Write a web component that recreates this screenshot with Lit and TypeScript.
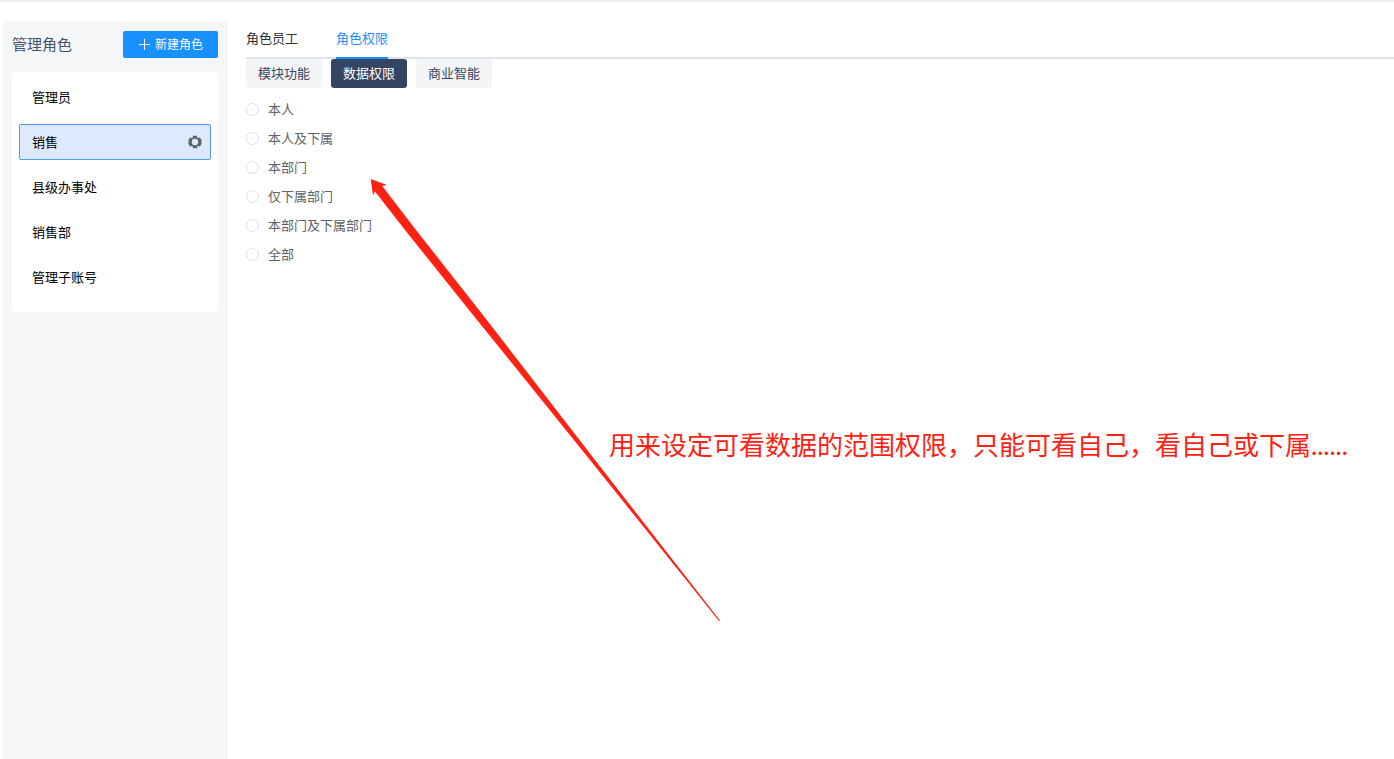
import { LitElement, html, css, svg } from "lit";
import { customElement, state } from "lit/decorators.js";
import { classMap } from "lit/directives/class-map.js";

const gearIcon = svg`<path fill="currentColor" fill-rule="evenodd" d="M4.800 .8h4.400v1.700l1.100.7 1.500-.9L14 6l-1.500 1L14 8l-2.200 3.700-1.500-.9-1.100.7v1.700H4.800v-1.700l-1.100-.7-1.500.9L0 8l1.500-1L0 6l2.200-3.700 1.500.9 1.100-.7zM7 3.800a3.200 3.200 0 1 0 0 6.400 3.200 3.200 0 0 0 0-6.400z"/>`;

@customElement("role-sidebar")
export class RoleSidebar extends LitElement {
  @state() private selected = "销售";
  private roles = ["管理员", "销售", "县级办事处", "销售部", "管理子账号"];

  static styles = css`
    :host {
      display: block;
      box-sizing: border-box;
      padding: 10px 10px 10px 9px;
      background: #f4f6f8;
    }
    .head {
      display: flex;
      align-items: center;
      justify-content: space-between;
      margin-bottom: 14px;
    }
    .title {
      margin: 0;
      padding-bottom: 2px;
      font-size: 15px;
      line-height: 20px;
      font-weight: 400;
      color: #44546f;
    }
    .create {
      display: flex;
      align-items: center;
      gap: 5px;
      height: 27px;
      padding: 0 15px 2px;
      border: 0;
      border-radius: 2px;
      background: #1890ff;
      color: #fff;
      font: inherit;
      font-size: 12px;
      line-height: 16px;
      cursor: pointer;
    }
    .plus {
      width: 12px;
      height: 12px;
    }
    .list {
      display: flex;
      flex-direction: column;
      gap: 9px;
      margin: 0;
      padding: 7px 7px 17px;
      list-style: none;
      background: #fff;
      border-radius: 3px;
    }
    .item {
      display: flex;
      align-items: center;
      box-sizing: border-box;
      height: 36px;
      padding-right: 8px;
      border: 1px solid transparent;
      border-radius: 2px;
    }
    .item.active {
      background: #dde9fd;
      border-color: #4a9afb;
    }
    .name {
      flex: 1;
      height: 100%;
      padding: 0 0 0 12px;
      border: 0;
      background: none;
      color: #000;
      font: inherit;
      text-align: left;
      cursor: pointer;
    }
    .settings {
      display: flex;
      padding: 0;
      border: 0;
      background: none;
      color: #606266;
      cursor: pointer;
    }
    .gear {
      width: 14px;
      height: 14px;
    }
  `;

  render() {
    return html`
      <div class="head">
        <h2 class="title">管理角色</h2>
        <button class="create" type="button">
          <svg class="plus" viewBox="0 0 12 12" aria-hidden="true">
            <path d="M6.500 1v11M1 6.500h11" stroke="currentColor" fill="none" />
          </svg>
          新建角色
        </button>
      </div>
      <ul class="list">
        ${this.roles.map(
          (role) => html`
            <li class=${classMap({ item: true, active: role === this.selected })}>
              <button class="name" type="button" @click=${() => (this.selected = role)}>${role}</button>
              ${role === this.selected
                ? html`<button class="settings" type="button" aria-label="设置">
                    <svg class="gear" viewBox="0 0 14 14">${gearIcon}</svg>
                  </button>`
                : null}
            </li>
          `
        )}
      </ul>
    `;
  }
}

@customElement("role-permissions")
export class RolePermissions extends LitElement {
  @state() private tab = "角色权限";
  @state() private section = "数据权限";
  private tabs = ["角色员工", "角色权限"];
  private sections = ["模块功能", "数据权限", "商业智能"];
  private scopes = ["本人", "本人及下属", "本部门", "仅下属部门", "本部门及下属部门", "全部"];

  static styles = css`
    :host {
      display: block;
    }
    button {
      border: 0;
      background: none;
      font: inherit;
      cursor: pointer;
    }
    .tabs {
      display: flex;
      gap: 38px;
      height: 38px;
      box-shadow: inset 0 -2px #dfe4ed;
    }
    .tab {
      padding: 0 0 4px;
      color: #303133;
    }
    .tab.active {
      color: #1890ff;
      box-shadow: inset 0 -2px #1890ff;
    }
    .sections {
      display: flex;
      gap: 9px;
    }
    .section {
      height: 29px;
      padding: 0 12px 2px;
      border-radius: 3px;
      background: #f4f5f7;
      color: #344563;
    }
    .section.active {
      background: #344563;
      color: #fff;
    }
    .scopes {
      display: flex;
      flex-direction: column;
      align-items: flex-start;
      margin: 0;
      padding: 7px 0 0;
      border: 0;
    }
    .scope {
      display: flex;
      align-items: center;
      gap: 9px;
      height: 29px;
      color: #606266;
      cursor: pointer;
    }
    .caption {
      padding-bottom: 2px;
    }
    .radio {
      appearance: none;
      box-sizing: border-box;
      width: 13px;
      height: 13px;
      margin: 0;
      border: 1px solid #dcdfe6;
      border-radius: 50%;
      background: #fff;
    }
    .radio:checked {
      border: 4px solid #1890ff;
    }
  `;

  render() {
    return html`
      <nav class="tabs">
        ${this.tabs.map(
          (t) => html`<button
            type="button"
            class=${classMap({ tab: true, active: t === this.tab })}
            @click=${() => (this.tab = t)}
          >${t}</button>`
        )}
      </nav>
      <div class="sections">
        ${this.sections.map(
          (s) => html`<button
            type="button"
            class=${classMap({ section: true, active: s === this.section })}
            @click=${() => (this.section = s)}
          >${s}</button>`
        )}
      </div>
      <fieldset class="scopes">
        ${this.scopes.map(
          (s) => html`<label class="scope"
            ><input class="radio" type="radio" name="scope" value=${s} /><span class="caption">${s}</span></label
          >`
        )}
      </fieldset>
    `;
  }
}

@customElement("app-root")
export class AppRoot extends LitElement {
  static styles = css`
    :host {
      display: flex;
      flex-direction: column;
      position: relative;
      box-sizing: border-box;
      min-height: 100vh;
      overflow: hidden;
      background: #fff;
      font-family: "Noto Sans CJK SC", sans-serif;
      font-size: 13px;
      line-height: 18px;
    }
    .topline {
      height: 3px;
      margin-bottom: 18px;
      background: linear-gradient(#e8e8ea, #fff);
    }
    .layout {
      flex: 1;
      display: grid;
      grid-template-columns: 225px 1fr;
      gap: 18px;
      padding-left: 3px;
    }
    .arrow {
      position: absolute;
      left: 370px;
      top: 178px;
      width: 351px;
      height: 444px;
      pointer-events: none;
    }
    .note {
      position: absolute;
      left: 609px;
      top: 427px;
      margin: 0;
      font-family: Lato, "Noto Sans CJK SC", sans-serif;
      font-size: 26px;
      line-height: 36px;
      white-space: nowrap;
      color: #ff2213;
    }
  `;

  render() {
    return html`
      <div class="topline"></div>
      <div class="layout">
        <role-sidebar></role-sidebar>
        <role-permissions></role-permissions>
      </div>
      <svg class="arrow" viewBox="0 0 351 444" aria-hidden="true">
        <path
          fill="#ff2213"
          d="M.7 1 17 7l-4.800 1L46 52l63 80 116 150 125 160.500-1 .5L220 282 99 132 35 52 5 13.500 3 17.500z"
        />
      </svg>
      <p class="note">用来设定可看数据的范围权限，只能可看自己，看自己或下属......</p>
    `;
  }
}
